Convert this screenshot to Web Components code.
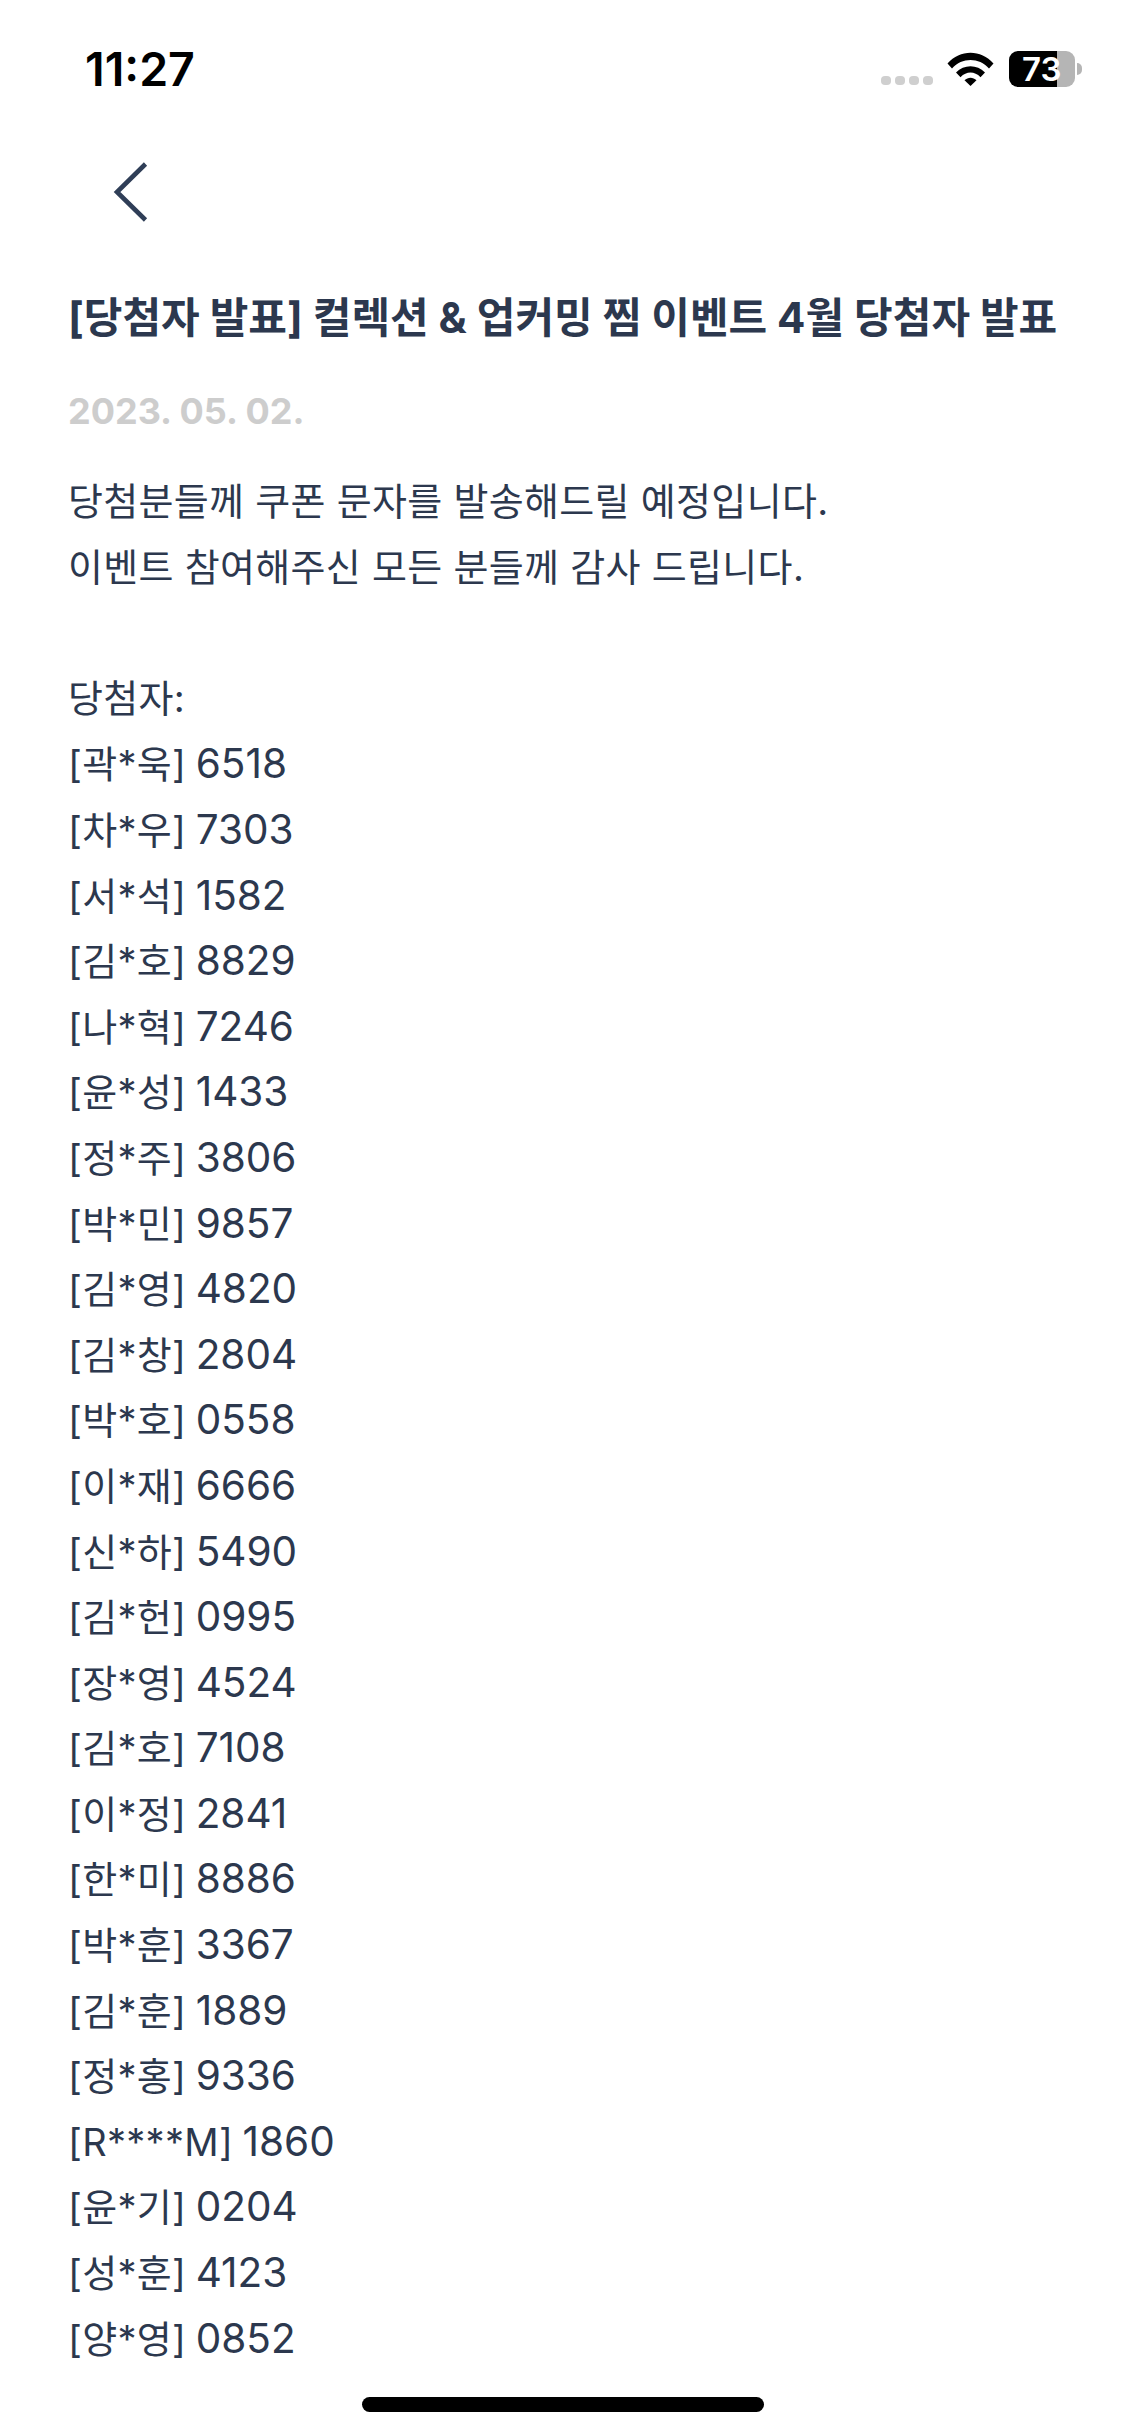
<!DOCTYPE html>
<html lang="ko">
<head>
<meta charset="utf-8">
<title>당첨자 발표</title>
<style>
  html, body { margin: 0; padding: 0; background: #fff; }
  body {
    width: 1125px;
    height: 2436px;
    overflow: hidden;
    display: flex;
    flex-direction: column;
    font-family: Inter, "Noto Sans CJK KR", sans-serif;
    color: #2c384e;
  }
</style>
</head>
<body>
  <status-bar time="11:27" battery="73"></status-bar>
  <back-nav></back-nav>
  <notice-article>
    <span slot="title">[당첨자 발표] 컬렉션 &amp; 업커밍 찜 이벤트 4월 당첨자 발표</span>
    <span slot="date">2023. 05. 02.</span>
    <div>당첨분들께 쿠폰 문자를 발송해드릴 예정입니다.</div>
    <div>이벤트 참여해주신 모든 분들께 감사 드립니다.</div>
    <div>&nbsp;</div>
    <div>당첨자:</div>
    <winner-list></winner-list>
  </notice-article>
  <home-indicator></home-indicator>

<script>
const winners = [
  '곽*욱 6518', '차*우 7303', '서*석 1582', '김*호 8829', '나*혁 7246',
  '윤*성 1433', '정*주 3806', '박*민 9857', '김*영 4820', '김*창 2804',
  '박*호 0558', '이*재 6666', '신*하 5490', '김*헌 0995', '장*영 4524',
  '김*호 7108', '이*정 2841', '한*미 8886', '박*훈 3367', '김*훈 1889',
  '정*홍 9336', 'R****M 1860', '윤*기 0204', '성*훈 4123', '양*영 0852'
];

class StatusBar extends HTMLElement {
  connectedCallback() {
    const time = this.getAttribute('time');
    const battery = this.getAttribute('battery');
    this.attachShadow({ mode: 'open' }).innerHTML = `
      <style>
        :host {
          display: flex;
          justify-content: space-between;
          align-items: flex-start;
          height: 140px;
          padding: 51px 43px 0 85px;
          box-sizing: border-box;
          color: #000;
        }
        .time { font: 600 46.5px/36px Inter, sans-serif; }
        .right { display: flex; align-items: flex-start; }
        .dots { display: flex; gap: 4px; margin: 25px 14px 0 0; }
        .dots i { width: 10px; height: 9px; border-radius: 4px; background: #cfcfcf; }
        .wifi { width: 47px; height: 34px; margin: 1px 15px 0 0; }
        .battery {
          width: 66px;
          height: 36px;
          border-radius: 9px;
          background: linear-gradient(90deg, #000 48px, #b5b5b5 48px);
          color: #fff;
          font: 600 33px/36px Inter, sans-serif;
          padding-left: 13px;
          box-sizing: border-box;
          white-space: nowrap;
        }
        .nub { width: 5px; height: 12px; margin: 12px 0 0 2px; background: #b5b5b5; border-radius: 0 6px 6px 0; }
      </style>
      <span class="time">${time}</span>
      <div class="right">
        <div class="dots"><i></i><i></i><i></i><i></i></div>
        <svg class="wifi" viewBox="0 0 47 34">
          <path d="M0.5 11.5 C13 -2.8 34 -2.8 46.5 11.5 L42 16.5 C32 5.2 15 5.2 5 16.5 Z" fill="#000"/>
          <path d="M9 20.5 C17 12 30 12 38 20.5 L33.5 25.2 C27.5 19 19.5 19 13.5 25.2 Z" fill="#000"/>
          <path d="M17.5 28.3 C21 24.8 26 24.8 29.5 28.3 L23.5 34 Z" fill="#000"/>
        </svg>
        <div class="battery">${battery}</div>
        <div class="nub"></div>
      </div>`;
  }
}

class BackNav extends HTMLElement {
  connectedCallback() {
    this.attachShadow({ mode: 'open' }).innerHTML = `
      <style>
        :host { display: block; height: 149px; padding: 20px 0 0 112px; box-sizing: border-box; }
        svg { display: block; width: 36px; height: 64px; }
      </style>
      <svg viewBox="0 0 36 64" aria-label="뒤로">
        <path d="M33.5 4 L5 32 L33.5 60" fill="none" stroke="#2f3e57" stroke-width="4.6"/>
      </svg>`;
  }
}

class NoticeArticle extends HTMLElement {
  connectedCallback() {
    this.attachShadow({ mode: 'open' }).innerHTML = `
      <style>
        :host { display: block; padding: 0 40px 0 68px; }
        .title { font-size: 42px; font-weight: 700; line-height: 58px; white-space: nowrap; }
        .date { margin-top: 35px; font-size: 36px; font-weight: 700; line-height: 58px; color: #cdcdcd; }
        .body { margin-top: 29px; font-size: 38px; line-height: 65.6px; letter-spacing: 0.3px; }
      </style>
      <div class="title"><slot name="title"></slot></div>
      <div class="date"><slot name="date"></slot></div>
      <div class="body"><slot></slot></div>`;
  }
}

class WinnerList extends HTMLElement {
  connectedCallback() {
    const rows = winners.map(w => {
      const [name, code] = w.split(' ');
      return `<div>[${name}] <span>${code}</span></div>`;
    }).join('');
    this.attachShadow({ mode: 'open' }).innerHTML = `
      <style>
        :host { display: block; }
        div { height: 65.6px; }
        span { font-size: 40.5px; letter-spacing: 0; margin-left: -1.5px; }
      </style>${rows}`;
  }
}

class HomeIndicator extends HTMLElement {
  connectedCallback() {
    this.attachShadow({ mode: 'open' }).innerHTML = `
      <style>
        :host { display: block; margin-top: auto; padding: 0 361px 24px 362px; }
        div { height: 15px; border-radius: 8px; background: #000; }
      </style>
      <div></div>`;
  }
}

customElements.define('status-bar', StatusBar);
customElements.define('back-nav', BackNav);
customElements.define('notice-article', NoticeArticle);
customElements.define('winner-list', WinnerList);
customElements.define('home-indicator', HomeIndicator);
</script>
</body>
</html>
